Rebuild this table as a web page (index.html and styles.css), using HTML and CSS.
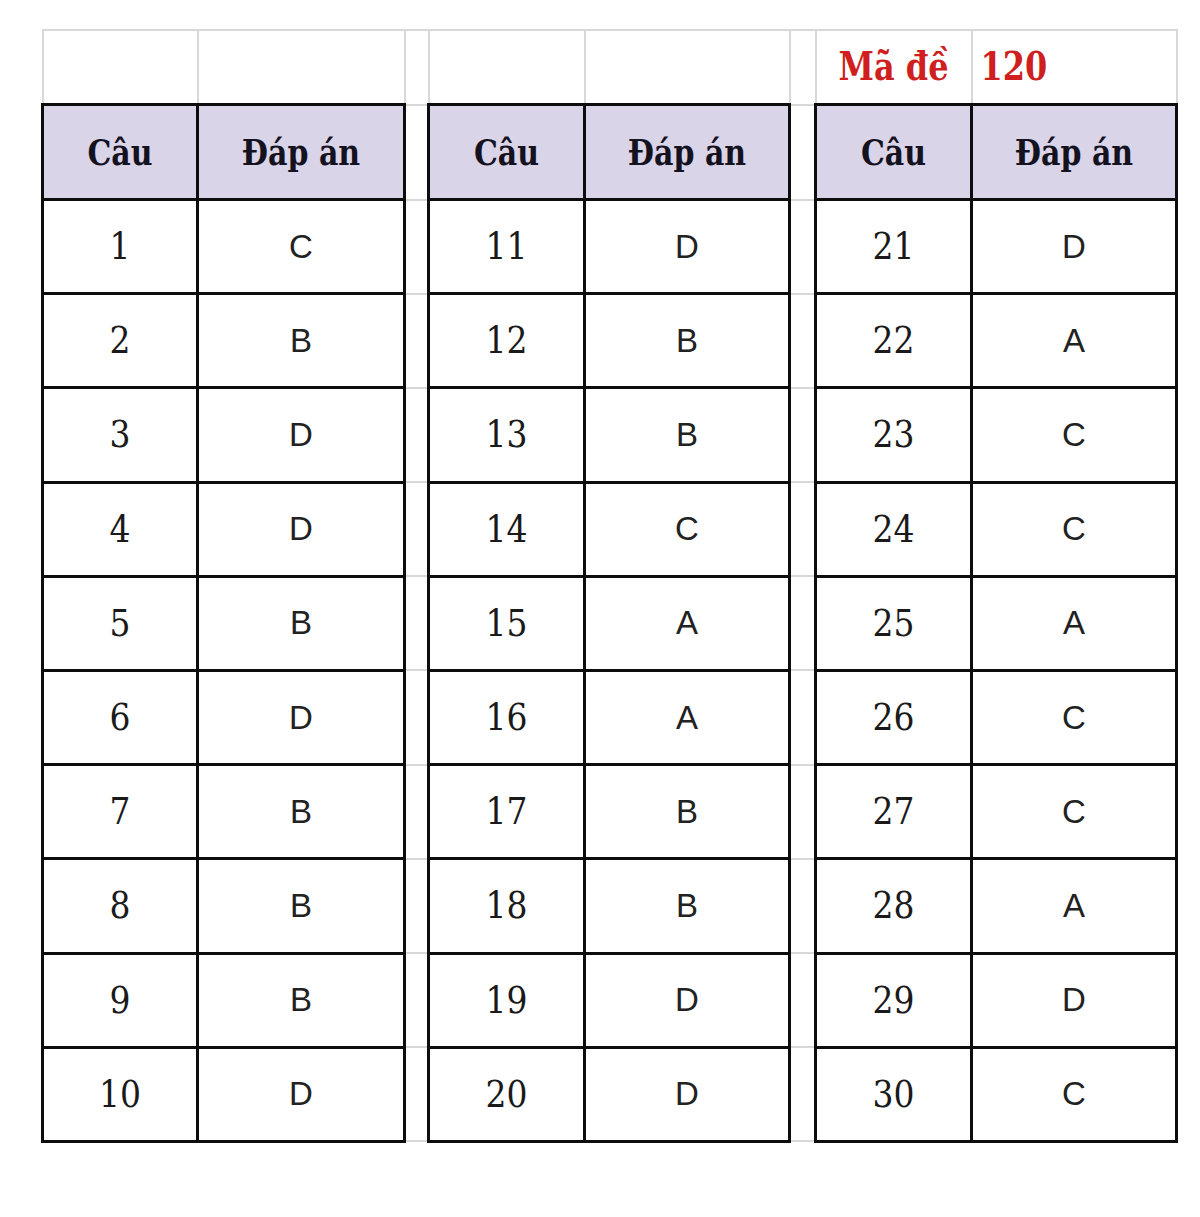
FILE: index.html
```html
<!DOCTYPE html>
<html lang="vi">
<head>
<meta charset="utf-8">
<title>Đáp án mã đề 120</title>
<link rel="stylesheet" href="styles.css">
</head>
<body>
<div class="sheet">
<table class="grid">
  <colgroup>
    <col class="c-q1"><col class="c-a1"><col class="c-gap1">
    <col class="c-q2"><col class="c-a2"><col class="c-gap2">
    <col class="c-q3"><col class="c-a3">
  </colgroup>
  <tr class="r-top">
    <td class="blank"></td><td class="blank"></td><td class="gap"></td>
    <td class="blank"></td><td class="blank"></td><td class="gap"></td>
    <td class="blank code-label"><span class="tx">Mã đề</span></td>
    <td class="blank code-value"><span class="tx">120</span></td>
  </tr>
  <tr class="r-head">
    <th class="hd"><span class="tx">Câu</span></th><th class="hd"><span class="tx">Đáp án</span></th><td class="gap"></td>
    <th class="hd"><span class="tx">Câu</span></th><th class="hd"><span class="tx">Đáp án</span></th><td class="gap"></td>
    <th class="hd"><span class="tx">Câu</span></th><th class="hd"><span class="tx">Đáp án</span></th>
  </tr>
  <tr class="r-data"><td class="num"><span class="tx">1</span></td><td class="ans">C</td><td class="gap"></td><td class="num"><span class="tx">11</span></td><td class="ans">D</td><td class="gap"></td><td class="num"><span class="tx">21</span></td><td class="ans">D</td></tr>
  <tr class="r-data"><td class="num"><span class="tx">2</span></td><td class="ans">B</td><td class="gap"></td><td class="num"><span class="tx">12</span></td><td class="ans">B</td><td class="gap"></td><td class="num"><span class="tx">22</span></td><td class="ans">A</td></tr>
  <tr class="r-data"><td class="num"><span class="tx">3</span></td><td class="ans">D</td><td class="gap"></td><td class="num"><span class="tx">13</span></td><td class="ans">B</td><td class="gap"></td><td class="num"><span class="tx">23</span></td><td class="ans">C</td></tr>
  <tr class="r-data"><td class="num"><span class="tx">4</span></td><td class="ans">D</td><td class="gap"></td><td class="num"><span class="tx">14</span></td><td class="ans">C</td><td class="gap"></td><td class="num"><span class="tx">24</span></td><td class="ans">C</td></tr>
  <tr class="r-data"><td class="num"><span class="tx">5</span></td><td class="ans">B</td><td class="gap"></td><td class="num"><span class="tx">15</span></td><td class="ans">A</td><td class="gap"></td><td class="num"><span class="tx">25</span></td><td class="ans">A</td></tr>
  <tr class="r-data"><td class="num"><span class="tx">6</span></td><td class="ans">D</td><td class="gap"></td><td class="num"><span class="tx">16</span></td><td class="ans">A</td><td class="gap"></td><td class="num"><span class="tx">26</span></td><td class="ans">C</td></tr>
  <tr class="r-data"><td class="num"><span class="tx">7</span></td><td class="ans">B</td><td class="gap"></td><td class="num"><span class="tx">17</span></td><td class="ans">B</td><td class="gap"></td><td class="num"><span class="tx">27</span></td><td class="ans">C</td></tr>
  <tr class="r-data"><td class="num"><span class="tx">8</span></td><td class="ans">B</td><td class="gap"></td><td class="num"><span class="tx">18</span></td><td class="ans">B</td><td class="gap"></td><td class="num"><span class="tx">28</span></td><td class="ans">A</td></tr>
  <tr class="r-data"><td class="num"><span class="tx">9</span></td><td class="ans">B</td><td class="gap"></td><td class="num"><span class="tx">19</span></td><td class="ans">D</td><td class="gap"></td><td class="num"><span class="tx">29</span></td><td class="ans">D</td></tr>
  <tr class="r-data"><td class="num"><span class="tx">10</span></td><td class="ans">D</td><td class="gap"></td><td class="num"><span class="tx">20</span></td><td class="ans">D</td><td class="gap"></td><td class="num"><span class="tx">30</span></td><td class="ans">C</td></tr>
</table>
</div>
</body>
</html>
```

FILE: styles.css
```css
html, body {
  margin: 0;
  padding: 0;
  background: #ffffff;
}

.sheet {
  padding: 29px 0 0 41px;
}

.grid {
  border-collapse: collapse;
  table-layout: fixed;
  width: 1134px;
}

.c-q1 { width: 155px; }
.c-a1 { width: 207px; }
.c-gap1 { width: 24px; }
.c-q2 { width: 156px; }
.c-a2 { width: 205px; }
.c-gap2 { width: 26px; }
.c-q3 { width: 156px; }
.c-a3 { width: 205px; }

.grid td, .grid th {
  padding: 0;
  text-align: center;
  vertical-align: middle;
}

.r-top td { height: 72px; }
.r-head th, .r-head td { height: 92px; }
.r-data td { height: 91.2px; }

.grid .blank, .grid .gap {
  border: 2px solid #d8d8d8;
}

.grid .hd, .grid .num, .grid .ans {
  border: 3px solid #0d0d0d;
}

.tx {
  display: inline-block;
}

.grid .hd {
  background: #d9d4e8;
  font-family: "DejaVu Serif", "Liberation Serif", serif;
  font-weight: bold;
  font-size: 30px;
  color: #15121f;
}

.hd .tx {
  transform: scaleY(1.16);
}

.grid .num {
  font-family: "DejaVu Serif", "Liberation Serif", serif;
  font-size: 33px;
  color: #1a1a1a;
}

.num .tx {
  transform: scaleY(1.13);
}

.grid .ans {
  font-family: "Liberation Sans", Arial, sans-serif;
  font-size: 33px;
  color: #222222;
}

.grid .code-label, .grid .code-value {
  font-family: "DejaVu Serif", "Liberation Serif", serif;
  font-weight: bold;
  font-size: 32px;
  color: #cf1f1f;
}

.code-label .tx, .code-value .tx {
  transform: scaleY(1.22);
}

.grid .code-value {
  text-align: left;
  padding-left: 8px;
}
```
